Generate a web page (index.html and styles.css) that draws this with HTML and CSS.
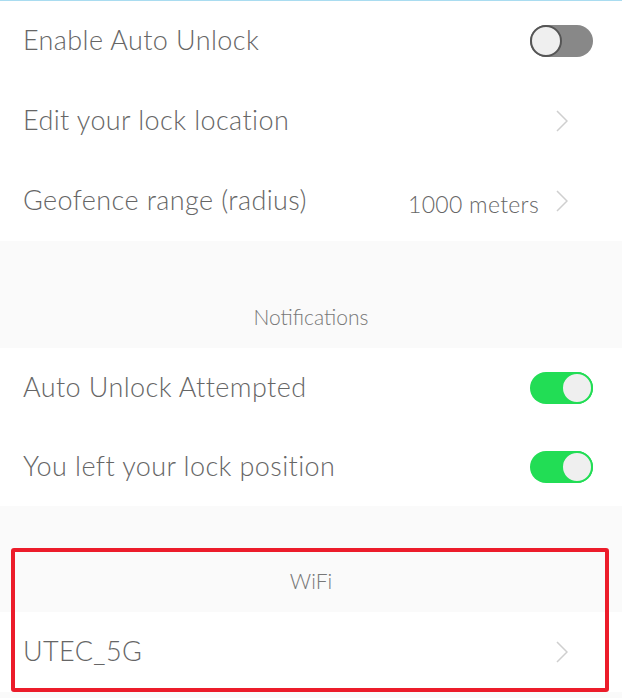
FILE: index.html
```html
<!DOCTYPE html>
<html lang="en">
<head>
    <meta charset="UTF-8">
    <meta name="viewport" content="width=device-width, initial-scale=1.0">
    <title>Auto Unlock Settings</title>
    <link rel="stylesheet" href="styles.css">
</head>
<body>

<div class="group top">
    <div class="row">
        <span class="label">Enable Auto Unlock</span>
        <span class="toggle"></span>
    </div>
    <div class="row">
        <span class="label">Edit your lock location</span>
        <span class="chevron"></span>
    </div>
    <div class="row">
        <span class="label">Geofence range (radius)</span>
        <span class="value">1000 meters</span>
        <span class="chevron"></span>
    </div>
</div>

<div class="section-title">Notifications</div>

<div class="group compact">
    <div class="row">
        <span class="label">Auto Unlock Attempted</span>
        <span class="toggle on"></span>
    </div>
    <div class="row">
        <span class="label">You left your lock position</span>
        <span class="toggle on"></span>
    </div>
</div>

<!-- WiFi block, highlighted -->
<div class="highlight-wrap">
    <div class="section-title">WiFi</div>
    <div class="group">
        <div class="row">
            <span class="label">UTEC_5G</span>
            <span class="chevron"></span>
        </div>
    </div>
    <div class="highlight"></div>
</div>

</body>
</html>
```

FILE: styles.css
```css
body {
    font-family: Lato, "Open Sans", sans-serif;
    font-weight: 300;
    background-color: #fafafa;
    margin: 0;
    color: #666;
}

.group {
    background-color: white;
}

.group.top {
    border-top: 1px solid #a9dcf0;
}

.row {
    height: 80px;
    display: flex;
    align-items: center;
    padding: 0 29px 0 23px;
}

.group.compact .row {
    height: 79px;
}

.label {
    flex: 1;
    font-size: 27px;
    letter-spacing: 0.4px;
    color: #666;
    margin-top: -3px;
}

.value {
    font-size: 23px;
    letter-spacing: 0.3px;
    color: #666;
    margin-right: 17px;
    margin-top: 6px;
}

.chevron {
    width: 12px;
    height: 22px;
    margin-right: 25px;
    background: no-repeat center / 12px 22px url("data:image/svg+xml,%3Csvg xmlns='http://www.w3.org/2000/svg' width='12' height='22' viewBox='0 0 12 22'%3E%3Cpath d='M1 1 L11 11 L1 21' fill='none' stroke='%23cfcfcf' stroke-width='1.5'/%3E%3C/svg%3E");
}

.toggle {
    position: relative;
    width: 63px;
    height: 32px;
    border-radius: 16px;
    background-color: #888;
}

.toggle::after {
    content: "";
    position: absolute;
    top: 0;
    left: 0;
    width: 28px;
    height: 28px;
    border-radius: 50%;
    background-color: #efefef;
    border: 2px solid #555;
}

.toggle.on {
    background-color: #22dd55;
}

.toggle.on::after {
    left: auto;
    right: 0;
    border-color: #22dd55;
}

.section-title {
    height: 107px;
    box-sizing: border-box;
    padding-bottom: 19px;
    display: flex;
    align-items: flex-end;
    justify-content: center;
    font-size: 21px;
    color: #777;
}

.highlight-wrap {
    position: relative;
}

.highlight-wrap .section-title {
    height: 106px;
}

.highlight {
    position: absolute;
    left: 11px;
    right: 13px;
    top: 42px;
    bottom: 0;
    border: 4px solid #ec1c2a;
    border-radius: 3px;
}
```
